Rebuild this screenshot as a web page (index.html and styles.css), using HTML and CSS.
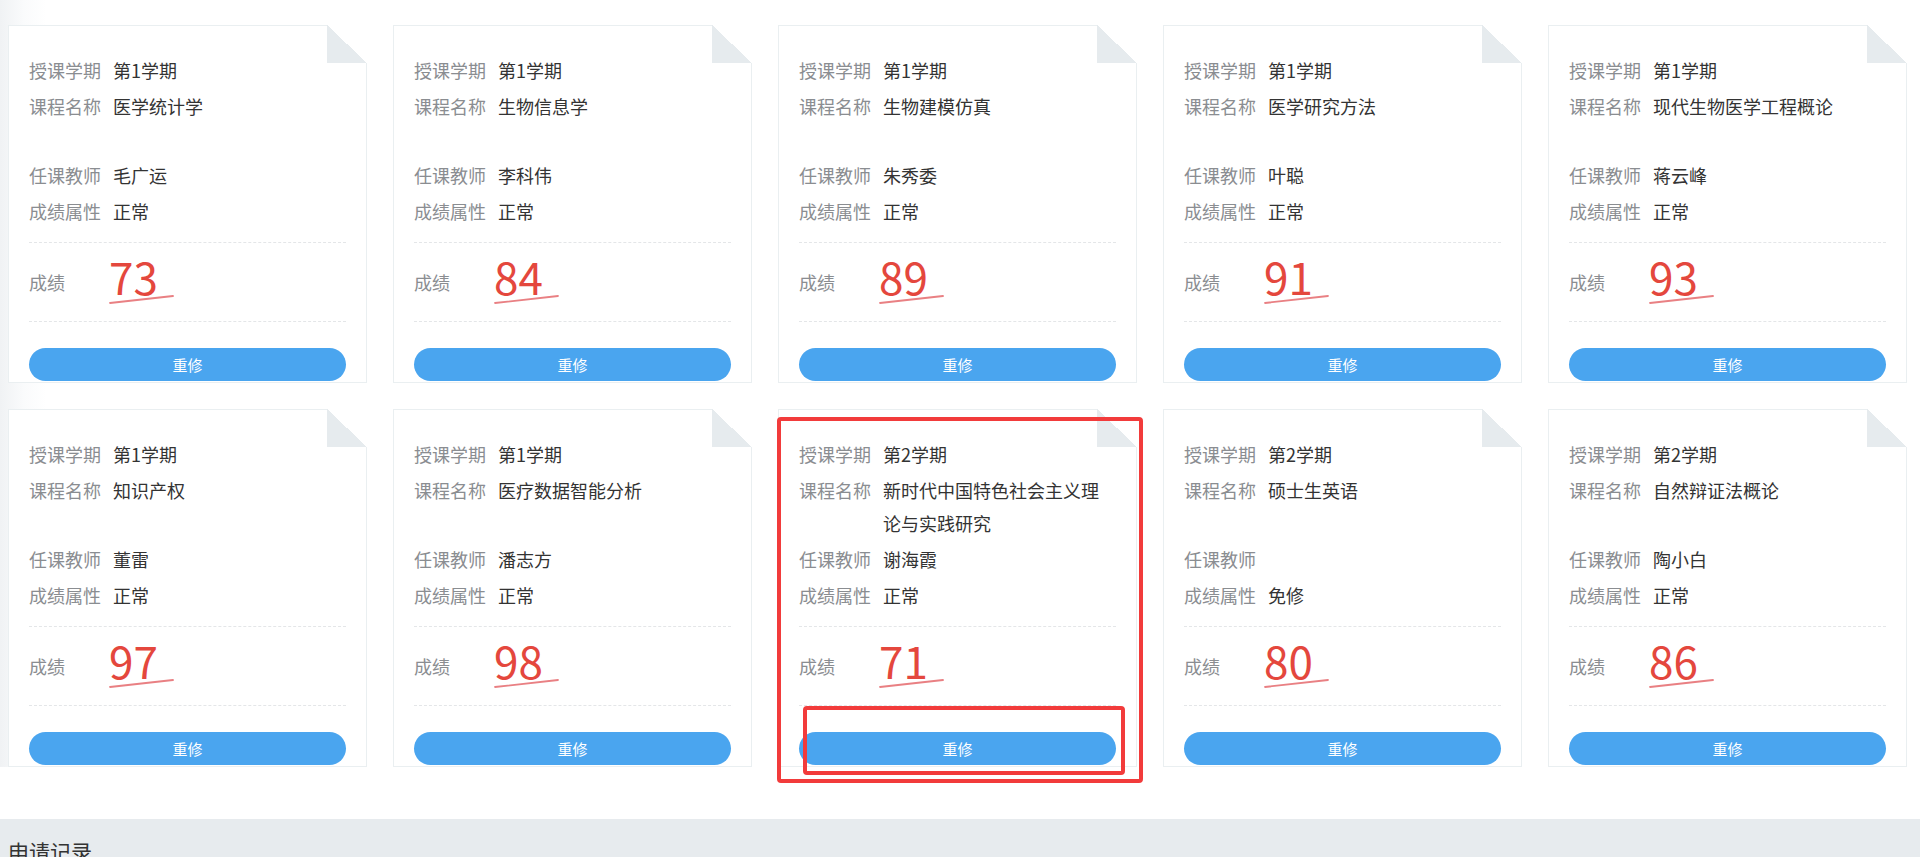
FILE: index.html
```html
<!DOCTYPE html>
<html lang="zh-CN">

<head>
  <meta charset="UTF-8">
  <meta name="viewport" content="width=device-width, initial-scale=1.0">
  <title>成绩查询</title>
  <link rel="stylesheet" href="styles.css">
</head>

<body>
  <div class="score-list">

    <div class="card">
      <div class="fold"></div>
      <div class="info">
        <div class="line"><span class="label">授课学期</span><span class="value">第1学期</span></div>
        <div class="line"><span class="label">课程名称</span><span class="value name">医学统计学</span></div>
        <div class="line"><span class="label">任课教师</span><span class="value">毛广运</span></div>
        <div class="line"><span class="label">成绩属性</span><span class="value">正常</span></div>
      </div>
      <div class="score">
        <span class="score-label">成绩</span>
        <span class="num">73<svg class="mark" width="68" height="12" viewBox="0 0 68 12"><line x1="1" y1="10" x2="64" y2="3" /></svg></span>
      </div>
      <button class="btn">重修</button>
    </div>

    <div class="card">
      <div class="fold"></div>
      <div class="info">
        <div class="line"><span class="label">授课学期</span><span class="value">第1学期</span></div>
        <div class="line"><span class="label">课程名称</span><span class="value name">生物信息学</span></div>
        <div class="line"><span class="label">任课教师</span><span class="value">李科伟</span></div>
        <div class="line"><span class="label">成绩属性</span><span class="value">正常</span></div>
      </div>
      <div class="score">
        <span class="score-label">成绩</span>
        <span class="num">84<svg class="mark" width="68" height="12" viewBox="0 0 68 12"><line x1="1" y1="10" x2="64" y2="3" /></svg></span>
      </div>
      <button class="btn">重修</button>
    </div>

    <div class="card">
      <div class="fold"></div>
      <div class="info">
        <div class="line"><span class="label">授课学期</span><span class="value">第1学期</span></div>
        <div class="line"><span class="label">课程名称</span><span class="value name">生物建模仿真</span></div>
        <div class="line"><span class="label">任课教师</span><span class="value">朱秀委</span></div>
        <div class="line"><span class="label">成绩属性</span><span class="value">正常</span></div>
      </div>
      <div class="score">
        <span class="score-label">成绩</span>
        <span class="num">89<svg class="mark" width="68" height="12" viewBox="0 0 68 12"><line x1="1" y1="10" x2="64" y2="3" /></svg></span>
      </div>
      <button class="btn">重修</button>
    </div>

    <div class="card">
      <div class="fold"></div>
      <div class="info">
        <div class="line"><span class="label">授课学期</span><span class="value">第1学期</span></div>
        <div class="line"><span class="label">课程名称</span><span class="value name">医学研究方法</span></div>
        <div class="line"><span class="label">任课教师</span><span class="value">叶聪</span></div>
        <div class="line"><span class="label">成绩属性</span><span class="value">正常</span></div>
      </div>
      <div class="score">
        <span class="score-label">成绩</span>
        <span class="num">91<svg class="mark" width="68" height="12" viewBox="0 0 68 12"><line x1="1" y1="10" x2="64" y2="3" /></svg></span>
      </div>
      <button class="btn">重修</button>
    </div>

    <div class="card">
      <div class="fold"></div>
      <div class="info">
        <div class="line"><span class="label">授课学期</span><span class="value">第1学期</span></div>
        <div class="line"><span class="label">课程名称</span><span class="value name">现代生物医学工程概论</span></div>
        <div class="line"><span class="label">任课教师</span><span class="value">蒋云峰</span></div>
        <div class="line"><span class="label">成绩属性</span><span class="value">正常</span></div>
      </div>
      <div class="score">
        <span class="score-label">成绩</span>
        <span class="num">93<svg class="mark" width="68" height="12" viewBox="0 0 68 12"><line x1="1" y1="10" x2="64" y2="3" /></svg></span>
      </div>
      <button class="btn">重修</button>
    </div>

    <div class="card">
      <div class="fold"></div>
      <div class="info">
        <div class="line"><span class="label">授课学期</span><span class="value">第1学期</span></div>
        <div class="line"><span class="label">课程名称</span><span class="value name">知识产权</span></div>
        <div class="line"><span class="label">任课教师</span><span class="value">董雷</span></div>
        <div class="line"><span class="label">成绩属性</span><span class="value">正常</span></div>
      </div>
      <div class="score">
        <span class="score-label">成绩</span>
        <span class="num">97<svg class="mark" width="68" height="12" viewBox="0 0 68 12"><line x1="1" y1="10" x2="64" y2="3" /></svg></span>
      </div>
      <button class="btn">重修</button>
    </div>

    <div class="card">
      <div class="fold"></div>
      <div class="info">
        <div class="line"><span class="label">授课学期</span><span class="value">第1学期</span></div>
        <div class="line"><span class="label">课程名称</span><span class="value name">医疗数据智能分析</span></div>
        <div class="line"><span class="label">任课教师</span><span class="value">潘志方</span></div>
        <div class="line"><span class="label">成绩属性</span><span class="value">正常</span></div>
      </div>
      <div class="score">
        <span class="score-label">成绩</span>
        <span class="num">98<svg class="mark" width="68" height="12" viewBox="0 0 68 12"><line x1="1" y1="10" x2="64" y2="3" /></svg></span>
      </div>
      <button class="btn">重修</button>
    </div>

    <div class="card">
      <div class="fold"></div>
      <div class="info">
        <div class="line"><span class="label">授课学期</span><span class="value">第2学期</span></div>
        <div class="line"><span class="label">课程名称</span><span class="value name">新时代中国特色社会主义理论与实践研究</span></div>
        <div class="line"><span class="label">任课教师</span><span class="value">谢海霞</span></div>
        <div class="line"><span class="label">成绩属性</span><span class="value">正常</span></div>
      </div>
      <div class="score">
        <span class="score-label">成绩</span>
        <span class="num">71<svg class="mark" width="68" height="12" viewBox="0 0 68 12"><line x1="1" y1="10" x2="64" y2="3" /></svg></span>
      </div>
      <button class="btn">重修</button>
      <!-- annotation boxes -->
      <div class="hl hl-card"></div>
      <div class="hl hl-btn"></div>
    </div>

    <div class="card">
      <div class="fold"></div>
      <div class="info">
        <div class="line"><span class="label">授课学期</span><span class="value">第2学期</span></div>
        <div class="line"><span class="label">课程名称</span><span class="value name">硕士生英语</span></div>
        <div class="line"><span class="label">任课教师</span><span class="value"></span></div>
        <div class="line"><span class="label">成绩属性</span><span class="value">免修</span></div>
      </div>
      <div class="score">
        <span class="score-label">成绩</span>
        <span class="num">80<svg class="mark" width="68" height="12" viewBox="0 0 68 12"><line x1="1" y1="10" x2="64" y2="3" /></svg></span>
      </div>
      <button class="btn">重修</button>
    </div>

    <div class="card">
      <div class="fold"></div>
      <div class="info">
        <div class="line"><span class="label">授课学期</span><span class="value">第2学期</span></div>
        <div class="line"><span class="label">课程名称</span><span class="value name">自然辩证法概论</span></div>
        <div class="line"><span class="label">任课教师</span><span class="value">陶小白</span></div>
        <div class="line"><span class="label">成绩属性</span><span class="value">正常</span></div>
      </div>
      <div class="score">
        <span class="score-label">成绩</span>
        <span class="num">86<svg class="mark" width="68" height="12" viewBox="0 0 68 12"><line x1="1" y1="10" x2="64" y2="3" /></svg></span>
      </div>
      <button class="btn">重修</button>
    </div>

  </div>

  <div class="section">
    <h3 class="section-title">申请记录</h3>
  </div>
</body>

</html>
```

FILE: styles.css
```css
* {
  box-sizing: border-box;
}

body {
  margin: 0;
  font-family: "Noto Sans CJK SC", "Noto Sans", sans-serif;
  color: #333;
  background: #fff;
}

.score-list {
  display: grid;
  grid-template-columns: repeat(5, 359px);
  column-gap: 26px;
  row-gap: 26px;
  padding: 25px 13px 0 8px;
  margin-bottom: 52px;
  background: linear-gradient(to right, #f0f2f4 0, #fafbfc 24px, #fff 46px);
}

.card {
  position: relative;
  background: #fff;
  border: 1px solid #eaeff1;
  padding: 28px 20px 1px 20px;
}

.fold {
  position: absolute;
  top: -1px;
  right: -1px;
  width: 40px;
  height: 38px;
  background: linear-gradient(to bottom left, #fff 50%, #e6ebee 50%);
}

.info {
  padding-bottom: 11px;
  border-bottom: 1px dashed #e4e6e8;
}

.line {
  display: flex;
  font-size: 18px;
  line-height: 33px;
  margin-bottom: 3px;
}

.label {
  flex: 0 0 84px;
  color: #8a8d91;
  white-space: nowrap;
}

.value {
  flex: 1;
  color: #333;
}

.name {
  min-height: 66px;
}

.score {
  display: flex;
  align-items: center;
  height: 79px;
  border-bottom: 1px dashed #e4e6e8;
}

.score-label {
  flex: 0 0 80px;
  font-size: 18px;
  color: #8a8d91;
}

.num {
  position: relative;
  font-family: "Noto Sans CJK SC", sans-serif;
  font-weight: 400;
  font-size: 44px;
  line-height: 46px;
  color: #e4473d;
  padding-bottom: 13px;
}

.mark {
  position: absolute;
  left: 0;
  top: 40px;
}

.mark line {
  stroke: #e66a6e;
  stroke-width: 1.8;
  stroke-linecap: round;
  opacity: 0.85;
}

.btn {
  display: block;
  width: 100%;
  height: 33px;
  margin-top: 26px;
  border: 0;
  border-radius: 17px;
  background: #4aa5ef;
  color: #fff;
  font-family: "Noto Sans CJK SC", sans-serif;
  font-size: 15px;
  cursor: pointer;
}

.hl {
  position: absolute;
  border: 4px solid #f23b3b;
  border-radius: 4px;
  pointer-events: none;
}

.hl-card {
  left: -2px;
  top: 7px;
  width: 366px;
  height: 366px;
}

.hl-btn {
  left: 24px;
  top: 296px;
  width: 322px;
  height: 69px;
}

.section {
  background: #e7ebee;
  padding: 18px 8px 30px;
}

.section-title {
  margin: 0;
  font-size: 21px;
  font-weight: normal;
  line-height: 28px;
  color: #333;
}
```
